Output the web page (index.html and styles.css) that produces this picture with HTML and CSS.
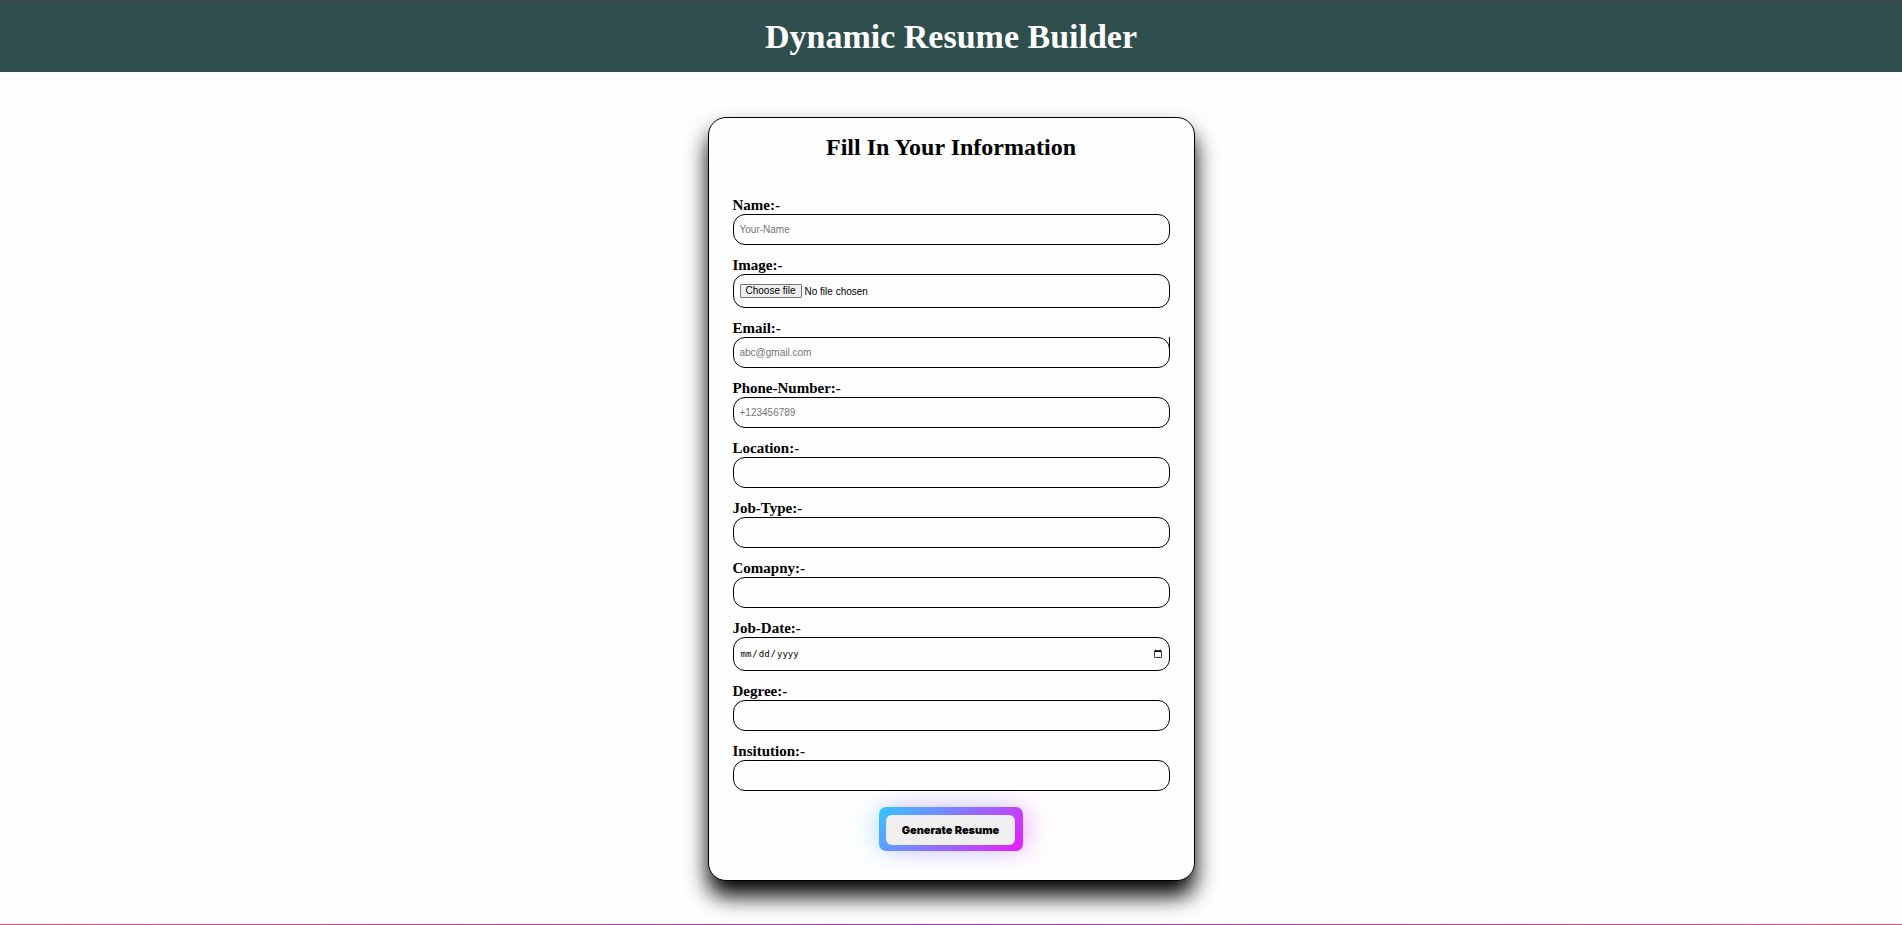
FILE: index.html
```html
<!DOCTYPE html>
<html lang="en">
<head>
<meta charset="utf-8">
<title>Dynamic Resume Builder</title>
<link rel="stylesheet" href="styles.css">
</head>
<body>
<header class="banner"><h1 class="banner-title">Dynamic Resume Builder</h1></header>
<main class="main">
<form class="card">
<h2 class="card-title">Fill In Your Information</h2>
<div class="field"><label for="name">Name:-</label><input class="control" id="name" type="text" placeholder="Your-Name"></div>
<div class="field"><label for="image">Image:-</label><div class="control control-tall file"><input class="file-input" id="image" type="file"><span class="file-button" aria-hidden="true">Choose file</span><span class="file-status" aria-hidden="true">No file chosen</span></div></div>
<div class="field field-marked"><label for="email">Email:-</label><input class="control" id="email" type="email" placeholder="abc@gmail.com"></div>
<div class="field"><label for="phone">Phone-Number:-</label><input class="control" id="phone" type="tel" placeholder="+123456789"></div>
<div class="field"><label for="location">Location:-</label><input class="control" id="location" type="text"></div>
<div class="field"><label for="job">Job-Type:-</label><input class="control" id="job" type="text"></div>
<div class="field"><label for="company">Comapny:-</label><input class="control" id="company" type="text"></div>
<div class="field"><label for="date">Job-Date:-</label><input class="control control-tall date" id="date" type="date"></div>
<div class="field"><label for="degree">Degree:-</label><input class="control" id="degree" type="text"></div>
<div class="field"><label for="institution">Insitution:-</label><input class="control" id="institution" type="text"></div>
<div class="glow"><button class="submit" type="button">Generate Resume</button></div>
</form>
</main>
<footer class="footer"></footer>
</body>
</html>
```
FILE: styles.css
```css
* { box-sizing: border-box; }
body {
  margin: 0;
  min-height: 100vh;
  display: flex;
  flex-direction: column;
  background: #fefefe;
  color: #000;
  font-family: "Liberation Serif", "Times New Roman", serif;
}
.banner {
  padding: 16px 0 15px;
  border-top: 1px solid #504a50;
  background: #2f4f4f;
  color: #fff;
  text-align: center;
}
.banner-title { margin: 0; font-size: 34px; line-height: 40px; }
.main {
  flex: 1;
  display: flex;
  justify-content: center;
  align-items: flex-start;
  padding: 45px 24px 43px;
}
.card {
  width: 100%;
  max-width: 487px;
  padding: 15px 24px 29px;
  border: 1px solid #000;
  border-radius: 18px;
  background: #fefefe;
  box-shadow: 0 15px 22px #000;
}
.card-title {
  margin: 0 0 35px;
  font-size: 24px;
  line-height: 28px;
  text-align: center;
}
.field { position: relative; margin-bottom: 11px; }
.field label {
  display: block;
  font-size: 15px;
  font-weight: bold;
  line-height: 18px;
}
.control {
  display: block;
  width: 100%;
  height: 31px;
  padding: 0 6px;
  border: 1px solid #000;
  border-radius: 12px;
  background: #fefefe;
  font: 10px "Liberation Sans", Arial, sans-serif;
}
.control::placeholder { color: #757575; }
.control-tall { height: 34px; }
.field-marked::after {
  content: "";
  position: absolute;
  top: 18px;
  right: 0;
  height: 12px;
  border-right: 1px solid #000;
}
.file { position: relative; display: flex; align-items: center; gap: 3px; }
.file-input { position: absolute; inset: 0; width: 100%; opacity: 0; }
.file-button {
  padding: 0 5px;
  border: 1px solid #767676;
  border-radius: 1px;
  background: #efefef;
  line-height: 12px;
}
.date { font-family: "DejaVu Sans Mono", monospace; font-size: 9px; }
.date::-webkit-calendar-picker-indicator { width: 10px; height: 10px; padding: 0; }
.glow {
  width: max-content;
  margin: 16px auto 0;
  padding: 8px 8px 6px 7px;
  border-radius: 7px;
  background: linear-gradient(135deg, #33c7ff, #e81cff);
  box-shadow: -8px 0 24px -4px rgba(51, 199, 255, 0.35), 8px 0 24px -4px rgba(232, 28, 255, 0.35);
}
.submit {
  height: 30px;
  padding: 0 16px;
  border: 0;
  border-radius: 6px;
  background: #efefef;
  color: #000;
  font: 900 11px Inter, sans-serif;
}
.footer { flex: none; height: 1px; background: linear-gradient(90deg, #f04a78, #a92bc5, #f04a78); }
```
